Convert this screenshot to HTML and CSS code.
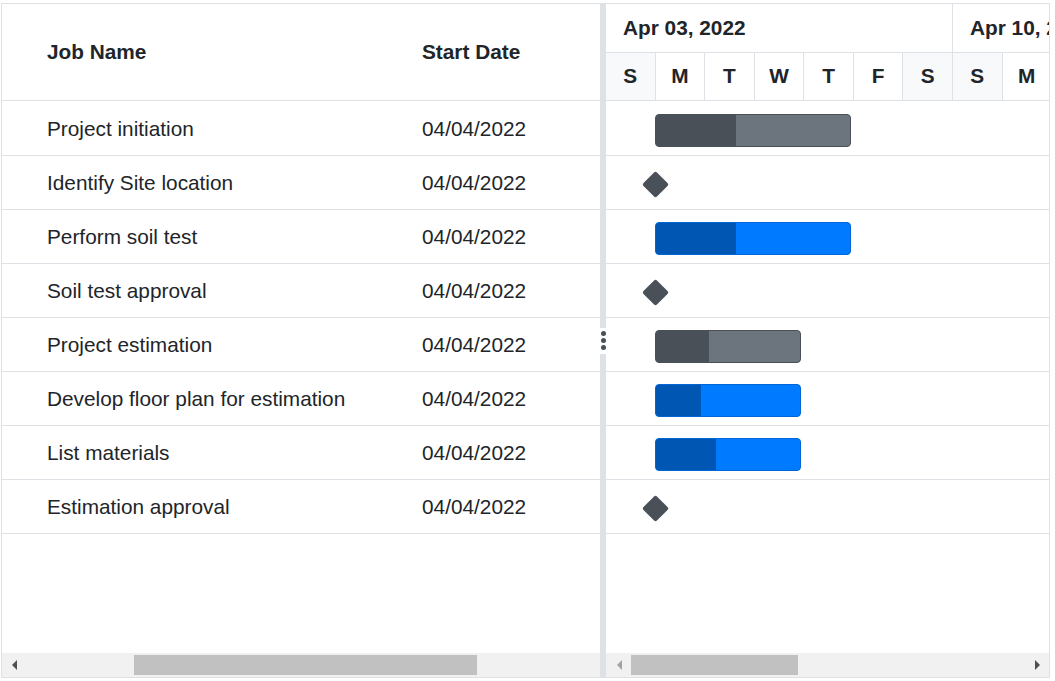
FILE: index.html
```html
<!DOCTYPE html>
<html>
<head>
<meta charset="utf-8">
<title>Gantt</title>
<link rel="stylesheet" href="styles.css">
</head>
<body>
<div class="gantt">
  <div class="grid-pane">
    <div class="grid-header">
      <div class="col col-name">Job Name</div>
      <div class="col col-date">Start Date</div>
    </div>
    <div class="grid-body">
      <div class="row"><div class="col col-name">Project initiation</div><div class="col col-date">04/04/2022</div></div>
      <div class="row"><div class="col col-name">Identify Site location</div><div class="col col-date">04/04/2022</div></div>
      <div class="row"><div class="col col-name">Perform soil test</div><div class="col col-date">04/04/2022</div></div>
      <div class="row"><div class="col col-name">Soil test approval</div><div class="col col-date">04/04/2022</div></div>
      <div class="row"><div class="col col-name">Project estimation</div><div class="col col-date">04/04/2022</div></div>
      <div class="row"><div class="col col-name">Develop floor plan for estimation</div><div class="col col-date">04/04/2022</div></div>
      <div class="row"><div class="col col-name">List materials</div><div class="col col-date">04/04/2022</div></div>
      <div class="row"><div class="col col-name">Estimation approval</div><div class="col col-date">04/04/2022</div></div>
    </div>
    <div class="hscroll">
      <div class="arrow-btn"><span class="tri tri-left"></span></div>
      <div class="thumb" style="margin-left:108px;width:343px"></div>
    </div>
  </div>

  <div class="splitter">
    <div class="grip"><span class="dot"></span><span class="dot"></span><span class="dot"></span></div>
  </div>

  <div class="chart-pane">
    <div class="timeline">
      <div class="weeks">
        <div class="week">Apr 03, 2022</div>
        <div class="week">Apr 10, 2022</div>
      </div>
      <div class="days">
        <div class="day weekend">S</div>
        <div class="day">M</div>
        <div class="day">T</div>
        <div class="day">W</div>
        <div class="day">T</div>
        <div class="day">F</div>
        <div class="day weekend">S</div>
        <div class="day weekend">S</div>
        <div class="day">M</div>
      </div>
    </div>
    <div class="chart-body">
      <div class="crow"><div class="bar bar-gray" style="width:196px"><div class="progress" style="width:80px"></div></div></div>
      <div class="crow"><div class="ms"><span class="diamond"></span></div></div>
      <div class="crow"><div class="bar bar-blue" style="width:196px"><div class="progress" style="width:80px"></div></div></div>
      <div class="crow"><div class="ms"><span class="diamond"></span></div></div>
      <div class="crow"><div class="bar bar-gray" style="width:146px"><div class="progress" style="width:53px"></div></div></div>
      <div class="crow"><div class="bar bar-blue" style="width:146px"><div class="progress" style="width:45px"></div></div></div>
      <div class="crow"><div class="bar bar-blue" style="width:146px"><div class="progress" style="width:60px"></div></div></div>
      <div class="crow"><div class="ms"><span class="diamond"></span></div></div>
    </div>
    <div class="hscroll">
      <div class="arrow-btn"><span class="tri tri-left light"></span></div>
      <div class="thumb" style="margin-left:1px;width:167px"></div>
      <div class="spacer"></div>
      <div class="arrow-btn"><span class="tri tri-right"></span></div>
    </div>
  </div>
</div>
</body>
</html>
```

FILE: styles.css
```css
html, body {
  margin: 0;
  padding: 0;
  background: #ffffff;
}

body {
  font-family: "Liberation Sans", Arial, sans-serif;
  font-size: 20.8px;
  color: #212529;
}

.gantt {
  margin: 3px 0 0 1px;
  width: 1049px;
  height: 675px;
  box-sizing: border-box;
  border: 1px solid #dee2e6;
  display: flex;
  overflow: hidden;
}

/* ---------- left grid ---------- */
.grid-pane {
  width: 598px;
  flex: none;
  display: flex;
  flex-direction: column;
}

.grid-header {
  height: 97px;
  box-sizing: border-box;
  border-bottom: 1px solid #dee2e6;
  display: flex;
  align-items: center;
  font-weight: bold;
  flex: none;
}

.col {
  box-sizing: border-box;
  padding-left: 45px;
  white-space: nowrap;
}

.col-name {
  width: 375px;
}

.col-date {
  flex: 1;
}

.grid-body {
  flex: 1;
  padding-top: 1px;
}

.row {
  height: 54px;
  box-sizing: border-box;
  border-bottom: 1px solid #dee2e6;
  display: flex;
  align-items: center;
  padding-top: 1px;
}

/* ---------- scrollbars ---------- */
.hscroll {
  height: 24px;
  flex: none;
  background: #f1f1f1;
  display: flex;
  align-items: center;
}

.arrow-btn {
  width: 24px;
  height: 24px;
  flex: none;
  display: flex;
  align-items: center;
  justify-content: center;
}

.tri {
  width: 0;
  height: 0;
  border-top: 5px solid transparent;
  border-bottom: 5px solid transparent;
}

.tri-left {
  border-right: 5px solid #505050;
}

.tri-left.light {
  border-right-color: #a3a3a3;
  margin-left: 3px;
}

.tri-right {
  border-left: 5px solid #505050;
}

.thumb {
  height: 20px;
  background: #c1c1c1;
  flex: none;
}

.spacer {
  flex: 1;
}

/* ---------- splitter ---------- */
.splitter {
  width: 6px;
  flex: none;
  background: #dee2e6;
  display: flex;
  flex-direction: column;
  justify-content: center;
}

.grip {
  height: 26px;
  background: #ffffff;
  display: flex;
  flex-direction: column;
  align-items: center;
  justify-content: center;
  gap: 2px;
}

.dot {
  width: 5px;
  height: 5px;
  border-radius: 50%;
  background: #495057;
}

/* ---------- chart ---------- */
.chart-pane {
  flex: 1;
  min-width: 0;
  display: flex;
  flex-direction: column;
  overflow: hidden;
}

.timeline {
  flex: none;
  font-weight: bold;
  border-bottom: 1px solid #dee2e6;
  height: 97px;
  box-sizing: border-box;
  display: flex;
  flex-direction: column;
}

.weeks {
  height: 49px;
  display: flex;
  border-bottom: 1px solid #dee2e6;
  box-sizing: border-box;
  flex: none;
}

.week {
  width: 347px;
  flex: none;
  box-sizing: border-box;
  border-right: 1px solid #dee2e6;
  padding-left: 17px;
  display: flex;
  align-items: center;
  white-space: nowrap;
  padding-bottom: 1px;
}

.days {
  flex: 1;
  display: flex;
}

.day {
  width: 49.57px;
  flex: none;
  box-sizing: border-box;
  border-right: 1px solid #dee2e6;
  display: flex;
  align-items: center;
  justify-content: center;
  padding-bottom: 1px;
}

.day.weekend {
  background: #f8f9fa;
}

.chart-body {
  flex: 1;
  padding-top: 1px;
}

.crow {
  height: 54px;
  box-sizing: border-box;
  border-bottom: 1px solid #dee2e6;
  padding-top: 12px;
  display: flex;
  align-items: flex-start;
}

.bar {
  margin-left: 49px;
  height: 33px;
  box-sizing: border-box;
  border-radius: 4px;
  border: 1px solid;
  overflow: hidden;
  display: flex;
}

.bar-gray {
  background: #6c757d;
  border-color: #495057;
}

.bar-gray .progress {
  background: #495057;
}

.bar-blue {
  background: #007bff;
  border-color: #0066d6;
}

.bar-blue .progress {
  background: #0056b3;
}

.progress {
  height: 100%;
}

.ms {
  margin-left: 36px;
  width: 27px;
  height: 33px;
  display: flex;
  align-items: center;
  justify-content: center;
}

.diamond {
  width: 19px;
  height: 19px;
  background: #495057;
  border-radius: 2px;
  transform: rotate(45deg);
}
```
